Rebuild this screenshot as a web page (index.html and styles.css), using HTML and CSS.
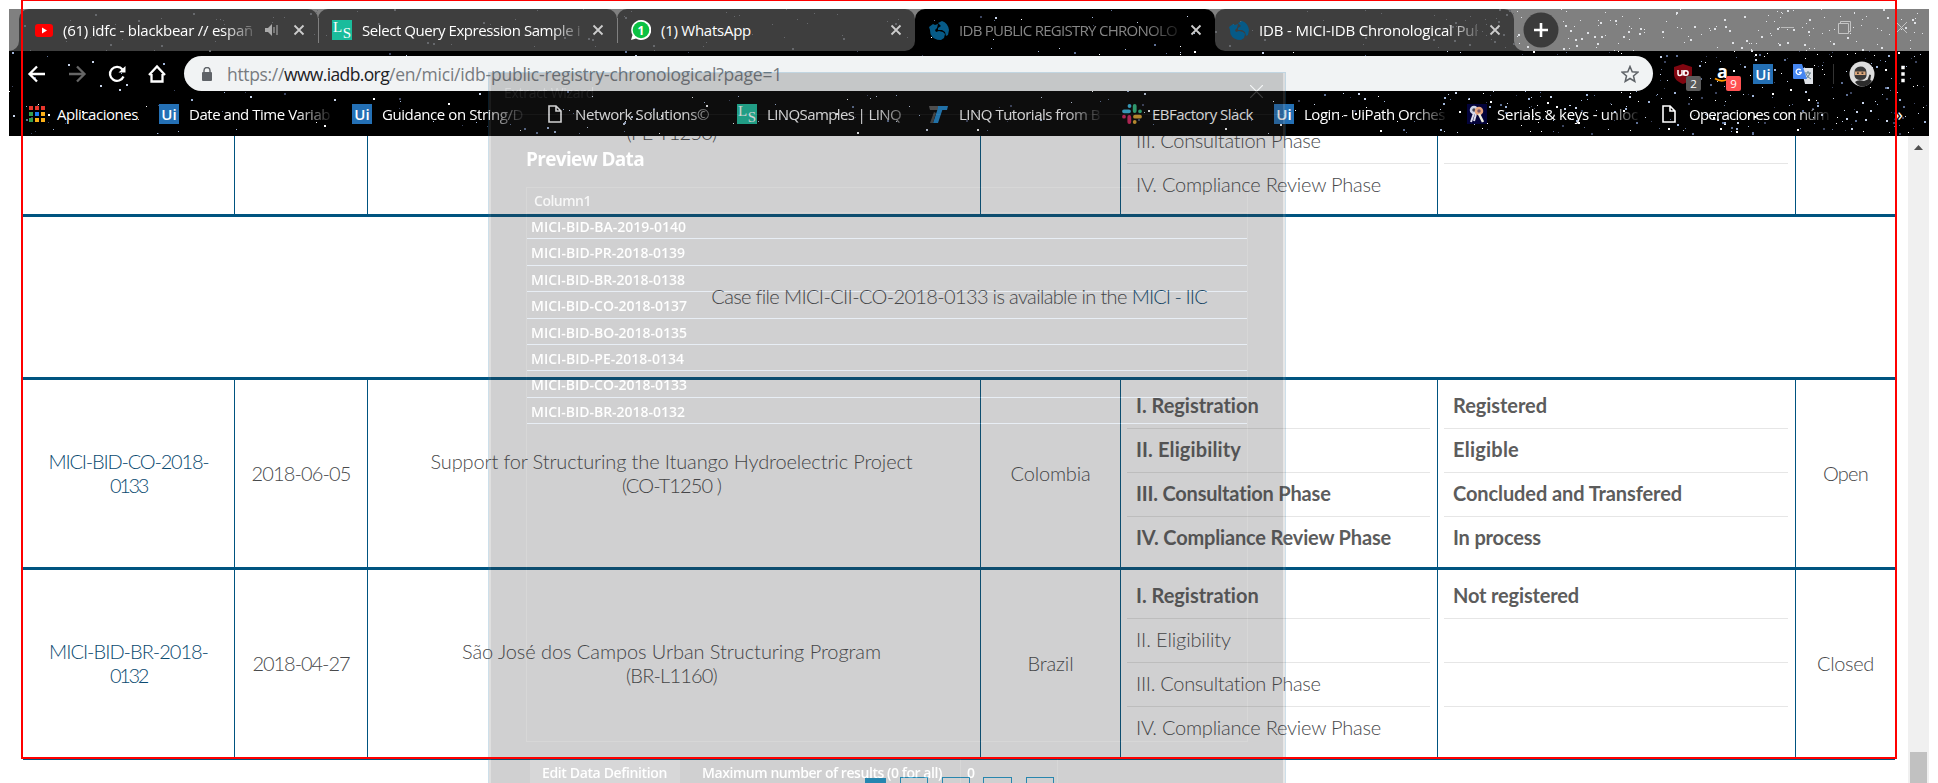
FILE: index.html
```html
<!DOCTYPE html>
<html lang="en">
<head>
<meta charset="utf-8">
<title>IDB Public Registry Chronological</title>
<link rel="stylesheet" href="styles.css">
</head>
<body>
<svg class="defs" width="0" height="0">
  <symbol id="close" viewBox="0 0 12 12"><path d="M1.5 1.500l9 9M10.500 1.500l-9 9" fill="none" stroke="currentColor" stroke-width="1.800"/></symbol>
  <symbol id="doc" viewBox="0 0 20 20"><path d="M4 2h7l5 5v11H4zM11 2v5h5" fill="none" stroke="currentColor" stroke-width="1.600"/></symbol>
  <symbol id="globe" viewBox="0 0 20 20"><path fill="#065a87" d="M0 7l4-3 2 1 3-1-1 4-2 2 1 2 3-1 4 1 2 2-1 4-3 2Q4 20 1.500 14L1 10zM9 3l4-2q6 2 7 9l-1 5-2 1-1-4-3-2-4 0 0-2 3-2z"/></symbol>
</svg>
<div class="window">
  <header class="chrome">
    <svg class="stars" id="stars" width="1920" height="127"></svg>
    <div class="tabs">
      <div class="edge"></div>
      <div class="tab"><div class="tab-body">
        <svg class="ico" viewBox="0 0 20 20"><rect x="2" y="4" width="18" height="13" rx="3" fill="#f00"/><path d="M9 7.500v6l5-3z" fill="#fff"/></svg>
        <div class="tab-title fade"><span data-w="190">(61) idfc - blackbear // españ</span></div>
        <svg class="audio" viewBox="0 0 13 12"><path d="M0 4h3l4-4v12L3 8H0z" fill="#aaa"/><path d="M9 3v6M12 1v10" stroke="#999" stroke-width="1.300"/></svg>
        <svg class="x"><use href="#close"/></svg>
      </div></div>
      <div class="tab sep"><div class="tab-body">
        <span class="ls"><b>L</b><i>S</i></span>
        <div class="tab-title fade"><span data-w="218">Select Query Expression Sample i</span></div>
        <svg class="x"><use href="#close"/></svg>
      </div></div>
      <div class="tab sep before-active"><div class="tab-body">
        <svg class="ico" viewBox="0 0 20 20"><path d="M10 0a10 10 0 1 1-5 18.500L0 20l1.500-5A10 10 0 0 1 10 0z" fill="#fff"/><circle cx="10" cy="10" r="8.300" fill="#0bc143"/><text x="10" y="14.500" class="wa">1</text></svg>
        <div class="tab-title"><span data-w="90">(1) WhatsApp</span></div>
        <svg class="x"><use href="#close"/></svg>
      </div></div>
      <div class="tab active"><div class="tab-body">
        <svg class="ico"><use href="#globe"/></svg>
        <div class="tab-title fade"><span data-w="218">IDB PUBLIC REGISTRY CHRONOLO</span></div>
        <svg class="x"><use href="#close"/></svg>
      </div></div>
      <div class="tab after-active"><div class="tab-body">
        <svg class="ico"><use href="#globe"/></svg>
        <div class="tab-title fade"><span data-w="219">IDB - MICI-IDB Chronological Pul</span></div>
        <svg class="x"><use href="#close"/></svg>
      </div></div>
      <div class="strip-end">
        <svg class="newtab" viewBox="0 0 36 36"><circle cx="18" cy="18" r="17.500" fill="#3b3b3b"/><path d="M18 11v14M11 18h14" stroke="#fff" stroke-width="2.600"/></svg>
        <div class="winctl">
          <svg viewBox="0 0 13 13"><path d="M0 6.500h13" stroke="#bbb"/></svg>
          <svg viewBox="0 0 13 13"><path d="M.5 2.500h10v10H.5zM2.500 2.500v-2h10v10h-2" fill="none" stroke="#c4c4c4"/></svg>
          <svg viewBox="0 0 13 13"><path d="M1 1l11 11M12 1L1 12" stroke="#c4c4c4"/></svg>
        </div>
      </div>
    </div>
    <div class="toolbar">
      <div class="nav">
        <svg viewBox="0 0 20 20"><path d="M18 10H3M10 2.500L2.500 10l7.500 7.500" /></svg>
        <svg viewBox="0 0 20 20" class="dim"><path d="M2 10h15M10 2.500l7.500 7.500-7.500 7.500"/></svg>
        <svg viewBox="0 0 20 20"><path d="M16.500 12.500A7 7 0 1 1 15.500 5.500"/><path d="M18.500 2v6.500h-7z" class="solid"/></svg>
        <svg viewBox="0 0 20 20"><path d="M4.500 10v7.500h11V10M2 11l8-8.500 8 8.500"/></svg>
      </div>
      <div class="omnibox">
        <svg class="lock" viewBox="0 0 10 14"><rect y="5" width="10" height="9" rx="1" fill="#5f6368"/><path d="M2 6V3.500a3 3 0 0 1 6 0V6" fill="none" stroke="#5f6368" stroke-width="1.400"/></svg>
        <div class="url"><span data-w="57">https://</span><span class="host" data-w="105">www.iadb.org</span><span data-w="393">/en/mici/idb-public-registry-chronological?page=1</span></div>
        <svg class="fav" viewBox="0 0 18 18"><path d="M9 1.500l2.200 5.200 5.600.5-4.300 3.700 1.300 5.500L9 13.500l-4.800 2.900 1.300-5.500L1.200 7.200l5.600-.5z" fill="none" stroke="#5f6368" stroke-width="1.500"/></svg>
      </div>
      <div class="exts">
        <div class="ext"><svg viewBox="0 0 20 20"><path d="M10 0l9 3v7c0 5-4 8-9 10-5-2-9-5-9-10V3z" fill="#800610"/><path d="M5 6v4q0 1.500 1.500 1.500T9 10V6v5.500M11 6v5.500" fill="none" stroke="#fff" stroke-width="1.500"/><circle cx="12.800" cy="9" r="2.300" fill="none" stroke="#fff" stroke-width="1.500"/></svg><span class="badge">2</span></div>
        <div class="ext"><span class="amz">a</span><svg class="smile" viewBox="0 0 20 20"><path d="M2 14.500q6 4 12 1" fill="none" stroke="#f90" stroke-width="1.700"/></svg><span class="badge red">9</span></div>
        <div class="ext"><span class="ui">Ui</span></div>
        <div class="ext"><svg viewBox="0 0 20 20"><path d="M8 4h12v16h-8z" fill="#dfe3e8"/><path d="M12 9h6M15 7v2M17 9q-1 4-5 6M13 10q1 3 5 5" stroke="#61808a" fill="none"/><path d="M0 0h9l5 15H1q-1 0-1-1z" fill="#4687f1"/><path d="M7.800 6.200A2.600 2.600 0 1 0 8.300 8.300H6" fill="none" stroke="#fff" stroke-width="1.300"/></svg></div>
        <i class="bar"></i>
        <svg class="avatar" viewBox="0 0 26 26"><circle cx="13" cy="13" r="12.500" fill="#ddd"/><path d="M5.500 11q0-5 6-5.500 5.500 0 6 5.500v4q-1 4-6 4-5 0-6-4z" fill="#383838"/><path d="M6 10.500h10.500v3.500H6z" fill="#d9a67c"/><path d="M8 12.200h1.800M12.500 12.200h1.800" stroke="#111" stroke-width="1.200"/><path d="M6 21q3-3 9-1l5-2 3 2q-3 5-9 5.500-5 0-8-4.500zM20.500 13.500l1.500.5-1 7-3-1z" fill="#2c2c2c"/></svg>
        <svg class="dots" viewBox="0 0 4 18"><path d="M.3.800h3.400v3.400H.3zM.3 7.300h3.400v3.400H.3zM.3 13.800h3.400v3.400H.3z" fill="#fff"/></svg>
      </div>
    </div>
    <div class="bookmarks">
      <div class="bm"><svg class="ico" viewBox="0 0 20 20"><path fill="#e8372d" d="M2 2h4v4H2zM8 2h4v4H8zM14 2h4v4h-4z"/><path fill="#34a050" d="M2 8h4v4H2zM2 14h4v4H2z"/><path fill="#1a7cf0" d="M8 8h4v4H8z"/><path fill="#fbb017" d="M14 8h4v4h-4zM8 14h4v4H8zM14 14h4v4h-4z"/></svg><span data-w="81">Aplicaciones</span></div>
      <div class="bm"><span class="ui">Ui</span><div class="fade"><span data-w="141">Date and Time Variab</span></div></div>
      <div class="bm"><span class="ui">Ui</span><div class="fade"><span data-w="141">Guidance on String/D</span></div></div>
      <div class="bm"><svg class="ico"><use href="#doc"/></svg><div class="fade slight"><span data-w="134">Network Solutions©</span></div></div>
      <div class="bm"><span class="ls"><b>L</b><i>S</i></span><div class="fade slight"><span data-w="134">LINQSamples | LINQ</span></div></div>
      <div class="bm"><svg class="ico" viewBox="0 0 20 20"><path d="M3 2h16l-1 4H2z" fill="#1b83c9"/><path d="M0 2h9v4H1z" fill="#555"/><path d="M9 4h5L9 19H4z" fill="#1b83c9"/><path d="M1 19l4-11 2 1-3 10z" fill="#444"/></svg><div class="fade"><span data-w="141">LINQ Tutorials from B</span></div></div>
      <div class="bm"><svg class="ico" viewBox="0 0 20 20"><g stroke-width="3.800" stroke-linecap="round"><path d="M2 7.300h5M7.500 2h.01" stroke="#36b3da"/><path d="M12.700 2v5M18 7.300h.01" stroke="#2eb67d"/><path d="M13 12.700h5M12.700 18h.01" stroke="#d9a02b"/><path d="M7.300 13v5M2 12.700h.01" stroke="#d0205a"/></g></svg><span data-w="101">EBFactory Slack</span></div>
      <div class="bm"><span class="ui">Ui</span><div class="fade"><span data-w="141">Login - UiPath Orches</span></div></div>
      <div class="bm"><svg class="ico" viewBox="0 0 20 20"><rect width="20" height="20" fill="#03033a"/><circle cx="7" cy="6" r="3" fill="#445" stroke="#ccd3e8" stroke-width="2.500"/><path d="M7 9L4 18M9 10l-2 7" stroke="#dde" stroke-width="2"/><circle cx="12" cy="7" r="3" fill="#756" stroke="#e9a680" stroke-width="2.500"/><path d="M12 10l4 8" stroke="#eed" stroke-width="2.500"/></svg><div class="fade"><span data-w="141">Serials &amp; keys - unloc</span></div></div>
      <div class="bm"><svg class="ico"><use href="#doc"/></svg><div class="fade"><span data-w="140">Operaciones con núm</span></div></div>
      <div class="bm more">»</div>
    </div>
  </header>

  <main class="viewport">
    <div class="page">
      <div class="registry">
        <div class="row">
          <div class="cell"></div><div class="cell"></div>
          <div class="cell project"><div><br><span data-w="90">(PE-T1250)</span></div></div>
          <div class="cell"></div>
          <div class="list"><p></p><p></p><p><span data-w="185">III. Consultation Phase</span></p><p><span data-w="245">IV. Compliance Review Phase</span></p></div>
          <div class="list"><p></p><p></p><p></p><p></p></div>
          <div class="cell"></div>
        </div>
        <div class="note"><span data-w="415">Case file MICI-CII-CO-2018-0133 is available in the</span><a data-w="75">MICI - IIC</a></div>
        <div class="row">
          <div class="cell"><a><span data-w="160">MICI-BID-CO-2018-</span><br><span data-w="37">0133</span></a></div>
          <div class="cell"><span data-w="99">2018-06-05</span></div>
          <div class="cell project"><div><span data-w="482">Support for Structuring the Ituango Hydroelectric Project</span><br><span data-w="99">(CO-T1250 )</span></div></div>
          <div class="cell"><span data-w="80">Colombia</span></div>
          <div class="list"><p><b data-w="123">I. Registration</b></p><p><b data-w="105">II. Eligibility</b></p><p><b data-w="195">III. Consultation Phase</b></p><p><b data-w="255">IV. Compliance Review Phase</b></p></div>
          <div class="list"><p><b data-w="94">Registered</b></p><p><b data-w="66">Eligible</b></p><p><b data-w="229">Concluded and Transfered</b></p><p><b data-w="88">In process</b></p></div>
          <div class="cell"><span data-w="45">Open</span></div>
        </div>
        <div class="row">
          <div class="cell"><a><span data-w="159">MICI-BID-BR-2018-</span><br><span data-w="37">0132</span></a></div>
          <div class="cell"><span data-w="97">2018-04-27</span></div>
          <div class="cell project"><div><span data-w="419">São José dos Campos Urban Structuring Program</span><br><span data-w="91">(BR-L1160)</span></div></div>
          <div class="cell"><span data-w="46">Brazil</span></div>
          <div class="list"><p><b data-w="123">I. Registration</b></p><p><span data-w="95">II. Eligibility</span></p><p><span data-w="185">III. Consultation Phase</span></p><p><span data-w="245">IV. Compliance Review Phase</span></p></div>
          <div class="list"><p><b data-w="126">Not registered</b></p><p></p><p></p><p></p></div>
          <div class="cell"><span data-w="57">Closed</span></div>
        </div>
      </div>
      <div class="pager"><i class="on"></i><i></i><i></i><i class="wide"></i><i></i></div>
    </div>
    <div class="scrollbar"><svg viewBox="0 0 9 5"><path d="M0 5l4.500-5L9 5z" fill="#505050"/></svg><div class="thumb"></div></div>
  </main>
</div>

<section class="wizard">
  <div class="wiz-head"><span data-w="90">Extract Wizard</span><svg viewBox="0 0 13 13"><path d="M0 0l13 13M13 0L0 13" stroke="#fff" stroke-width="1.200"/></svg></div>
  <h2><span data-w="118">Preview Data</span></h2>
  <div class="preview">
    <div class="col-head"><span data-w="57">Column1</span></div>
    <div class="pv"><span data-w="155">MICI-BID-BA-2019-0140</span></div>
    <div class="pv"><span data-w="154">MICI-BID-PR-2018-0139</span></div>
    <div class="pv"><span data-w="154">MICI-BID-BR-2018-0138</span></div>
    <div class="pv"><span data-w="156">MICI-BID-CO-2018-0137</span></div>
    <div class="pv"><span data-w="156">MICI-BID-BO-2018-0135</span></div>
    <div class="pv"><span data-w="153">MICI-BID-PE-2018-0134</span></div>
    <div class="pv"><span data-w="156">MICI-BID-CO-2018-0133</span></div>
    <div class="pv"><span data-w="154">MICI-BID-BR-2018-0132</span></div>
  </div>
  <div class="wiz-foot">
    <div class="edit"><span data-w="125">Edit Data Definition</span></div>
    <div class="max"><span data-w="240">Maximum number of results (0 for all)</span></div>
    <div class="num">0</div>
  </div>
</section>
<div class="highlight"></div>
<script src="app.js"></script>
</body>
</html>
```
FILE: styles.css
```css
* { box-sizing: border-box; }
body { margin: 0; width: 1938px; height: 783px; overflow: hidden; background: #fff; position: relative; font-family: "Open Sans", "Noto Sans", sans-serif; }
svg { display: block; flex: none; }
.defs { position: absolute; }
[data-w] { display: inline-block; white-space: nowrap; }
.window { padding: 9px 9px 0; height: 783px; display: flex; flex-direction: column; }

/* browser frame */
.chrome { position: relative; height: 127px; flex: none; background: #000; color: #fff; font-size: 15px; }
.stars { position: absolute; inset: 0; z-index: 1; }
.tabs { display: flex; height: 42px; background: #3e3e3e; }
.edge { width: 10px; background: #808080; border-bottom-right-radius: 10px; }
.tab { width: 299px; background: linear-gradient(#808080 12px, #3e3e3e 12px); }
.tab-body { height: 42px; background: #3e3e3e; border-radius: 10px 10px 0 0; display: flex; align-items: center; padding: 0 13px 0 14px; position: relative; }
.tab-body > *, .newtab, .winctl, .nav, .omnibox, .exts, .bm { position: relative; z-index: 2; }
.sep .tab-body::before { content: ""; position: absolute; left: 0; top: 9px; width: 1px; height: 25px; background: #808080; }
.before-active { width: 298px; }
.active { width: 300px; }
.before-active, .after-active, .active { background: linear-gradient(#808080 12px, #000 12px); }
.before-active .tab-body { border-radius: 10px 10px 10px 0; }
.after-active .tab-body { border-radius: 10px 10px 0 10px; }
.active .tab-body { background: #000; color: #858585; }
.tab-title { flex: 1; min-width: 0; margin-left: 10px; overflow: hidden; white-space: nowrap; line-height: 24px; padding-bottom: 1px; }
.fade { white-space: nowrap; -webkit-mask-image: linear-gradient(90deg, #000 calc(100% - 34px), transparent calc(100% + 4px)); mask-image: linear-gradient(90deg, #000 calc(100% - 34px), transparent calc(100% + 4px)); }
.tab .fade { margin-right: 8px; }
.slight { -webkit-mask-image: linear-gradient(90deg, #000 calc(100% - 25px), #0007); mask-image: linear-gradient(90deg, #000 calc(100% - 25px), #0007); }
.ico { width: 20px; height: 20px; }
.x { width: 12px; height: 12px; color: #ccc; }
.audio { width: 13px; height: 12px; margin-right: 15px; }
.wa { font: 700 12px "Open Sans", sans-serif; fill: #fff; text-anchor: middle; }
.ls { width: 20px; height: 20px; background: #1abc9c; color: #fff; position: relative; flex: none; font: 15px/15px "Liberation Serif", serif; display: flex; justify-content: space-between; padding: 0 1px; }
.ls b { font-weight: 400; }
.ls i { font-style: normal; padding-top: 6px; }
.ui { width: 20px; height: 20px; background: #2470b5; color: #fff; font: 600 15px/20px "Open Sans", sans-serif; text-align: center; flex: none; display: block; }
.strip-end { flex: 1; background: #808080; border-bottom-left-radius: 10px; display: flex; align-items: center; justify-content: space-between; padding: 0 21px 0 9px; }
.newtab { width: 36px; height: 36px; }
.winctl { display: flex; gap: 44px; }
.winctl svg { width: 13px; height: 13px; margin-top: -5px; }

.toolbar { display: flex; height: 45px; align-items: center; padding-left: 18px; }
.nav { display: flex; gap: 20px; width: 157px; }
.nav svg { width: 20px; height: 20px; fill: none; stroke: #fff; stroke-width: 2.3; }
.nav .dim { stroke: #666; }
.nav .solid { fill: #fff; stroke: none; }
.omnibox { width: 1469px; height: 35px; border-radius: 18px; background: #f1f3f4; display: flex; align-items: center; padding: 0 14px 0 18px; }
.lock { width: 10px; height: 14px; }
.url { flex: 1; margin-left: 15px; font-size: 17.5px; line-height: 24px; color: #777b80; white-space: nowrap; }
.host { color: #202124; }
.fav { width: 18px; height: 18px; }
.exts { display: flex; align-items: center; margin-left: 20px; }
.ext { width: 20px; height: 20px; margin-right: 20px; position: relative; }
.ext svg { width: 20px; height: 20px; }
.badge { position: absolute; left: 13px; top: 12px; width: 15px; height: 15px; border-radius: 2px; background: #5a5a5a; color: #fff; font-size: 11.5px; line-height: 15px; text-align: center; }
.red { background: #ff5252; }
.amz { position: absolute; left: 4px; top: -3px; font: 700 18px/20px "Open Sans", sans-serif; }
.bar { width: 1px; height: 20px; background: #333; }
.avatar { width: 26px; height: 26px; margin-left: 15px; }
.dots { width: 4px; height: 18px; margin-left: 26px; }

.bookmarks { display: grid; grid-template-columns: 132px 193px 193px 192px 192px 193px 152px 193px 192px 229px 30px; padding-left: 18px; height: 36px; align-items: center; }
.bm { display: flex; align-items: center; gap: 10px; line-height: 22px; }
.bm [data-w] { padding-bottom: 1px; }
.more { font-size: 18px; padding-left: 6px; }

/* registry page */
.viewport { flex: 1; display: flex; overflow: hidden; }
.page { flex: 1; padding-left: 14px; font: 300 20px/24px Lato, "Open Sans", sans-serif; color: #48494b; }
.registry { margin-top: -109px; width: 1872px; }
.row { display: grid; grid-template-columns: 212px 133px 613px 140px 317px 358px 99px; height: 190px; border-bottom: 3px solid #005480; }
.row > * { border-right: 1px solid #005480; }
.row > :last-child { border-right: 0; }
.cell { display: flex; align-items: center; justify-content: center; text-align: center; padding-bottom: 2px; }
.cell.project { padding-right: 5px; }
a { color: #0a4a70; }
.list { padding: 5px 7px 0 6px; }
.list p { margin: 0; height: 44px; border-bottom: 1px solid #e6e6e6; padding: 8px 9px 0; }
.list p:last-child { border-bottom: 0; }
.list b { font-weight: 700; color: #5c5c5c; }
.note { height: 163px; border-bottom: 3px solid #005480; display: flex; align-items: center; justify-content: center; gap: 5px; padding-bottom: 2px; }
.pager { display: flex; margin: 17px 0 0 842px; }
.pager i { width: 28px; height: 30px; border: 1px solid #249fd2; margin-right: 13.5px; }
.pager .on { width: 21px; background: #1f9fd5; margin-top: 1px; margin-right: 14px; }
.pager .wide { width: 29px; }
.scrollbar { width: 21px; background: #f0f0f0; display: flex; flex-direction: column; align-items: center; padding-top: 9px; }
.scrollbar svg { width: 9px; height: 5px; }
.thumb { margin-top: auto; width: 17px; height: 31px; background: #c1c1c1; }

/* translucent wizard dialog above the page */
.wizard { position: absolute; left: 488px; top: 72px; width: 798px; height: 711px; overflow: hidden; z-index: 5; opacity: .231; background: #38383b; color: #fff; border: 1px solid #2a78a8; border-bottom: 0; box-shadow: inset 2px 0 #777, inset -2px 0 #999; font-size: 14px; font-weight: 600; }
.wiz-head { display: flex; justify-content: space-between; padding: 7px 22px 0 15px; height: 42px; color: #888; line-height: 26px; border-bottom: 1px solid #666; font-weight: 400; }
.wiz-head svg { width: 13px; height: 13px; margin-top: 5px; }
.wizard h2 { margin: 30px 0 13px 37px; font-size: 19px; line-height: 29px; font-weight: 700; }
.preview { margin-left: 37px; width: 722px; height: 555px; border: 1px solid #555; }
.col-head { height: 25px; padding-left: 7px; line-height: 25px; border-bottom: 1px solid #4c4c4c; color: #ddd; }
.pv { height: 26.4px; border-bottom: 1px solid #9fb8d8; padding-left: 4px; line-height: 28px; }
.wiz-foot { display: flex; margin: 16px 0 0 41px; height: 40px; line-height: 30px; }
.edit { width: 150px; background: #55565a; padding-left: 12px; }
.max { padding-left: 22px; width: 279px; }
.num { width: 98px; border: 1px solid #555; padding-left: 6px; line-height: 28px; margin-left: 1px; }

.highlight { position: absolute; left: 21px; top: 0; width: 1876px; height: 759px; border: 2px solid #f00; border-top-width: 1px; z-index: 6; }
```
FILE: app.js
```js
// Tracks each label to its measured width.
document.querySelectorAll('[data-w]').forEach(function (el) {
  var n = el.textContent.length;
  var w = el.getBoundingClientRect().width;
  el.style.letterSpacing = ((el.dataset.w - w) / n).toFixed(3) + 'px';
});

// Starfield theme: denser towards the right of the window.
var seed = 7;
function rnd() { seed = (seed * 16807) % 2147483647; return seed / 2147483647; }
var colors = ['#ffffff', '#9fb4d8', '#5d6f94', '#3c4560', '#c8d4ea'];
var out = '';
for (var i = 0; i < 2200; i++) {
  var x = rnd() * 1918, y = rnd() * 125;
  if (x < 1430 && rnd() > 0.25) continue;
  if (x < 12 && y < 42) continue;
  var inTab = y < 42 && x < 1505 && !(x > 908 && x < 1204);
  var c = inTab ? '#66686c' : colors[Math.floor(rnd() * 5)];
  if (y < 42 && x > 1505) c = '#e0e2e6';
  var s = rnd() > 0.65 ? 2 : 1;
  out += '<rect x="' + Math.floor(x) + '" y="' + Math.floor(y) + '" width="' + s + '" height="' + s + '" fill="' + c + '"/>';
}
document.getElementById('stars').innerHTML = out;
```
